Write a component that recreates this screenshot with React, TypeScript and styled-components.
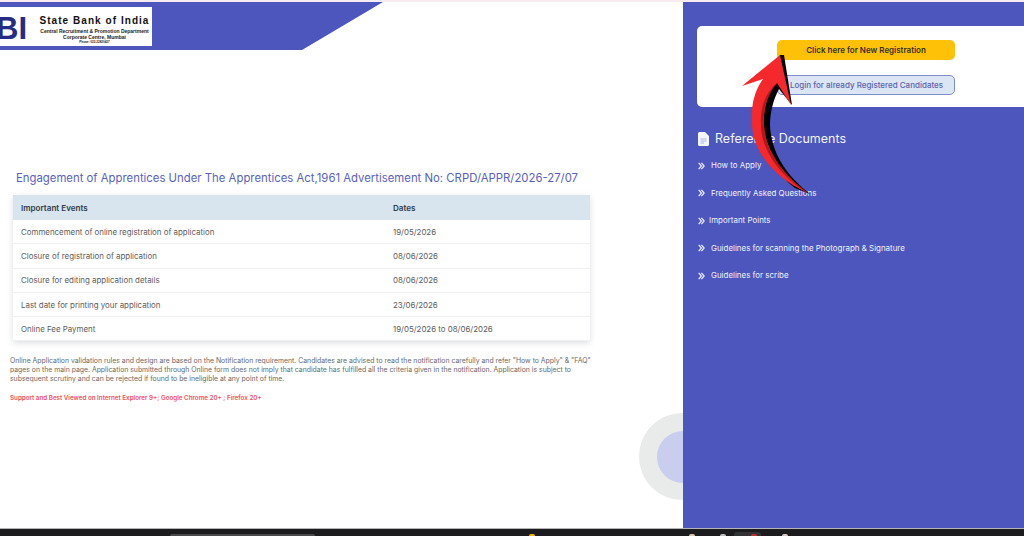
import * as React from "react";
import styled, { createGlobalStyle } from "styled-components";

const Global = createGlobalStyle`
  html, body { margin: 0; padding: 0; background: #fff; }
  body { font-family: Inter, "Liberation Sans", sans-serif; overflow: hidden; }
`;

const Page = styled.div`
  position: relative;
  width: 1024px;
  height: 536px;
  display: flex;
  flex-direction: column;
  overflow: hidden;
  background: #fff;
`;

const TopLine = styled.div`
  height: 2px;
  flex: none;
  background: #f9ecf1;
`;

const Main = styled.div`
  flex: 1;
  min-height: 0;
  display: flex;
`;

const LeftColumn = styled.div`
  position: relative;
  width: 683px;
  flex: none;
`;

const Banner = styled.header`
  height: 48px;
  width: 383px;
  box-sizing: border-box;
  padding-top: 5px;
  background: #4c56bd;
  clip-path: polygon(0 0, 383px 0, 302px 100%, 0 100%);
`;

const LogoBox = styled.div`
  width: 152px;
  height: 39px;
  background: #fff;
  display: flex;
  overflow: hidden;
`;

const LogoMark = styled.div`
  width: 41px;
  flex: none;
  margin-left: -4px;
  padding-top: 2px;
  font-family: "Liberation Sans", sans-serif;
  font-weight: 700;
  font-size: 31px;
  line-height: 39px;
  color: #262c86;
`;

const LogoText = styled.div`
  flex: 1;
  display: flex;
  flex-direction: column;
  align-items: center;
  padding-top: 7.5px;
  font-family: "Liberation Sans", sans-serif;
  color: #222;
  white-space: nowrap;
`;

const LogoName = styled.div`
  font-size: 10px;
  line-height: 11px;
  font-weight: 700;
  letter-spacing: 1.05px;
  margin-bottom: 2px;
  color: #111;
`;

const LogoLine = styled.div<{ $size: number; $height: number }>`
  font-size: ${(p) => p.$size}px;
  line-height: ${(p) => p.$height}px;
  font-weight: 700;
`;

const Content = styled.div`
  padding: 120px 93px 0 10px;
`;

const Title = styled.h1`
  margin: 0 0 9px 6px;
  font-size: 11.35px;
  line-height: 16px;
  font-weight: 400;
  white-space: nowrap;
  color: #5a5fbe;
`;

const EventsTable = styled.div`
  margin-left: 3px;
  width: 577px;
  background: #fff;
  box-shadow: 0 2px 6px rgba(60, 70, 90, 0.18);
`;

const Row = styled.div<{ $head?: boolean }>`
  display: grid;
  grid-template-columns: 372px 1fr;
  align-items: center;
  padding-left: 8px;
  height: ${(p) => (p.$head ? 25 : 24.3)}px;
  box-sizing: border-box;
  background: ${(p) => (p.$head ? "#d8e4ee" : "#fff")};
  color: ${(p) => (p.$head ? "#333b47" : "#5c5c5c")};
  font-size: ${(p) => (p.$head ? 8.1 : 7.9)}px;
  font-weight: ${(p) => (p.$head ? 600 : 400)};
  border-bottom: ${(p) => (p.$head ? "none" : "1px solid #eef0f3")};
`;

const Note = styled.p`
  margin: 15px 0 0;
  width: 590px;
  font-size: 6.87px;
  line-height: 9px;
  color: #6a6a6a;
`;

const Support = styled.p`
  margin: 10.5px 0 0;
  font-size: 6.25px;
  line-height: 9px;
  font-weight: 600;
  color: #f0505f;
`;

const RingOuter = styled.div`
  position: absolute;
  left: 639px;
  top: 411px;
  width: 87px;
  height: 87px;
  border-radius: 50%;
  background: #e9eaea;
  display: flex;
  align-items: center;
  justify-content: center;
`;

const RingInner = styled.div`
  width: 52px;
  height: 52px;
  border-radius: 50%;
  background: #c9cdee;
`;

const SidePanel = styled.aside`
  position: relative;
  flex: 1;
  padding: 24px 0 0 14px;
  background: #4c56bd;
  color: #fff;
`;

const ActionCard = styled.div`
  height: 81px;
  box-sizing: border-box;
  padding: 14px 0 0 80px;
  background: #fff;
  border-radius: 5px 0 0 5px;
  display: flex;
  flex-direction: column;
  gap: 15px;
`;

const ActionButton = styled.div<{ $primary?: boolean }>`
  width: 178px;
  height: 20px;
  box-sizing: border-box;
  display: flex;
  align-items: center;
  justify-content: center;
  border-radius: 5px;
  font-size: 8px;
  font-weight: ${(p) => (p.$primary ? 600 : 500)};
  background: ${(p) => (p.$primary ? "#ffc107" : "#dbe5f3")};
  color: ${(p) => (p.$primary ? "#33302a" : "#5a63ae")};
  border: ${(p) => (p.$primary ? "none" : "1px solid #7f8ccc")};
  padding-left: ${(p) => (p.$primary ? 0 : 1)}px;
`;

const DocsHeading = styled.h2`
  margin: 23px 0 12px 1px;
  display: flex;
  align-items: center;
  gap: 6px;
  font-size: 12.5px;
  line-height: 18px;
  font-weight: 400;
  color: #f3f4fb;
`;

const DocsList = styled.ul`
  list-style: none;
  margin: 0;
  padding: 0 0 0 1px;
  display: flex;
  flex-direction: column;
  gap: 16.6px;
`;

const DocsItem = styled.li<{ $tight?: boolean }>`
  display: flex;
  align-items: center;
  gap: ${(p) => (p.$tight ? 4 : 6)}px;
  font-size: 7.95px;
  line-height: 11px;
  color: #f1f2fb;
`;

const Arrow = styled.svg`
  position: absolute;
  left: 735px;
  top: 48px;
  width: 85px;
  height: 150px;
  pointer-events: none;
`;

const Taskbar = styled.footer`
  height: 8px;
  flex: none;
  box-sizing: border-box;
  border-top: 1px solid #b5b5b8;
  background: #1c1c1e;
  display: flex;
  align-items: flex-end;
  padding-left: 170px;
  overflow: hidden;
`;

const TaskSearch = styled.div`
  width: 145px;
  height: 2px;
  flex: none;
  border-radius: 3px 3px 0 0;
  background: #4a4a4c;
`;

const TaskSlot = styled.div`
  width: 27px;
  height: 4px;
  flex: none;
  margin-left: 8px;
  border-radius: 3px 3px 0 0;
  background: #333335;
  display: flex;
  align-items: flex-end;
`;

const TaskIcon = styled.div<{ $color: string; $gap: number }>`
  width: 6px;
  height: 2px;
  flex: none;
  margin-left: ${(p) => p.$gap}px;
  border-radius: 3px 3px 0 0;
  background: ${(p) => p.$color};
`;

const events = [
  ["Commencement of online registration of application", "19/05/2026"],
  ["Closure of registration of application", "08/06/2026"],
  ["Closure for editing application details", "08/06/2026"],
  ["Last date for printing your application", "23/06/2026"],
  ["Online Fee Payment", "19/05/2026 to 08/06/2026"],
];

const docs = [
  "How to Apply",
  "Frequently Asked Questions",
  "Important Points",
  "Guidelines for scanning the Photograph & Signature",
  "Guidelines for scribe",
];

function Chevrons() {
  return (
    <svg width="7" height="8" viewBox="0 0 7 8" fill="none" stroke="#e8eaf8" strokeWidth="1.3">
      <path d="M0.7 0.8 L3.4 4 L0.7 7.2" />
      <path d="M3.4 0.8 L6.1 4 L3.4 7.2" />
    </svg>
  );
}

function DocIcon() {
  return (
    <svg width="11" height="14" viewBox="0 0 11 14">
      <path d="M1.5 0 H7 L11 4 V12.5 A1.5 1.5 0 0 1 9.5 14 H1.5 A1.5 1.5 0 0 1 0 12.5 V1.5 A1.5 1.5 0 0 1 1.5 0 Z" fill="#f4f5fc" />
      <path d="M2.5 7 H8.5 M2.5 9 H8.5 M2.5 11 H6" stroke="#a9b0e2" strokeWidth="0.9" />
    </svg>
  );
}

export default function App() {
  return (
    <Page>
      <Global />
      <TopLine />
      <Main>
        <LeftColumn>
          <Banner>
            <LogoBox>
              <LogoMark>BI</LogoMark>
              <LogoText>
                <LogoName>State Bank of India</LogoName>
                <LogoLine $size={5} $height={6}>Central Recruitment &amp; Promotion Department</LogoLine>
                <LogoLine $size={5} $height={6}>Corporate Centre, Mumbai</LogoLine>
                <LogoLine $size={3} $height={4}>Phone: 022-22820427</LogoLine>
              </LogoText>
            </LogoBox>
          </Banner>
          <Content>
            <Title>Engagement of Apprentices Under The Apprentices Act,1961 Advertisement No: CRPD/APPR/2026-27/07</Title>
            <EventsTable>
              <Row $head>
                <span>Important Events</span>
                <span>Dates</span>
              </Row>
              {events.map(([name, date]) => (
                <Row key={name}>
                  <span>{name}</span>
                  <span>{date}</span>
                </Row>
              ))}
            </EventsTable>
            <Note>
              Online Application validation rules and design are based on the Notification requirement. Candidates are advised to read the notification carefully and refer "How to Apply" &amp; "FAQ" pages on the main page. Application submitted through Online form does not imply that candidate has fulfilled all the criteria given in the notification. Application is subject to subsequent scrutiny and can be rejected if found to be ineligible at any point of time.
            </Note>
            <Support>Support and Best Viewed on Internet Explorer 9+; Google Chrome 20+ ; Firefox 20+</Support>
          </Content>
          <RingOuter>
            <RingInner />
          </RingOuter>
        </LeftColumn>
        <SidePanel>
          <ActionCard>
            <ActionButton $primary>Click here for New Registration</ActionButton>
            <ActionButton>Login for already Registered Candidates</ActionButton>
          </ActionCard>
          <DocsHeading>
            <DocIcon />
            Reference Documents
          </DocsHeading>
          <DocsList>
            {docs.map((d) => (
              <DocsItem key={d} $tight={d === "Important Points"}>
                <Chevrons />
                {d}
              </DocsItem>
            ))}
          </DocsList>
        </SidePanel>
      </Main>
      <Taskbar>
        <TaskSearch />
        <TaskIcon $color="#f2b705" $gap={214} />
        <TaskIcon $color="#d8c9b0" $gap={154} />
        <TaskIcon $color="#bdbdbd" $gap={25} />
        <TaskSlot>
          <TaskIcon $color="#c03030" $gap={17} />
        </TaskSlot>
        <TaskIcon $color="#d9c8c8" $gap={21} />
      </Taskbar>
      {/* coordinates below are page px minus (735, 48) */}
      <Arrow viewBox="0 0 85 150">
        <path d="M45 7 L49 7 L57 57 L44 41 C38 52 35 65 35 77 C36 105 52 128 75 146 L60 140 C40 125 25 100 25 70 C25 50 30 30 45 7 Z" fill="#000" />
        <path d="M45 7 L7 38 L28 31 C18 45 16 60 17 77 C18 100 35 128 73 145 C52 130 30 105 29 77 C28 60 33 45 42 35 L56 57 Z" fill="#f5282c" />
        <path d="M42 35 C33 45 28 60 29 77 C30 105 52 130 73 145 C50 132 26 105 26 77 C25 60 30 45 42 35 Z" fill="#b5161c" />
      </Arrow>
    </Page>
  );
}
